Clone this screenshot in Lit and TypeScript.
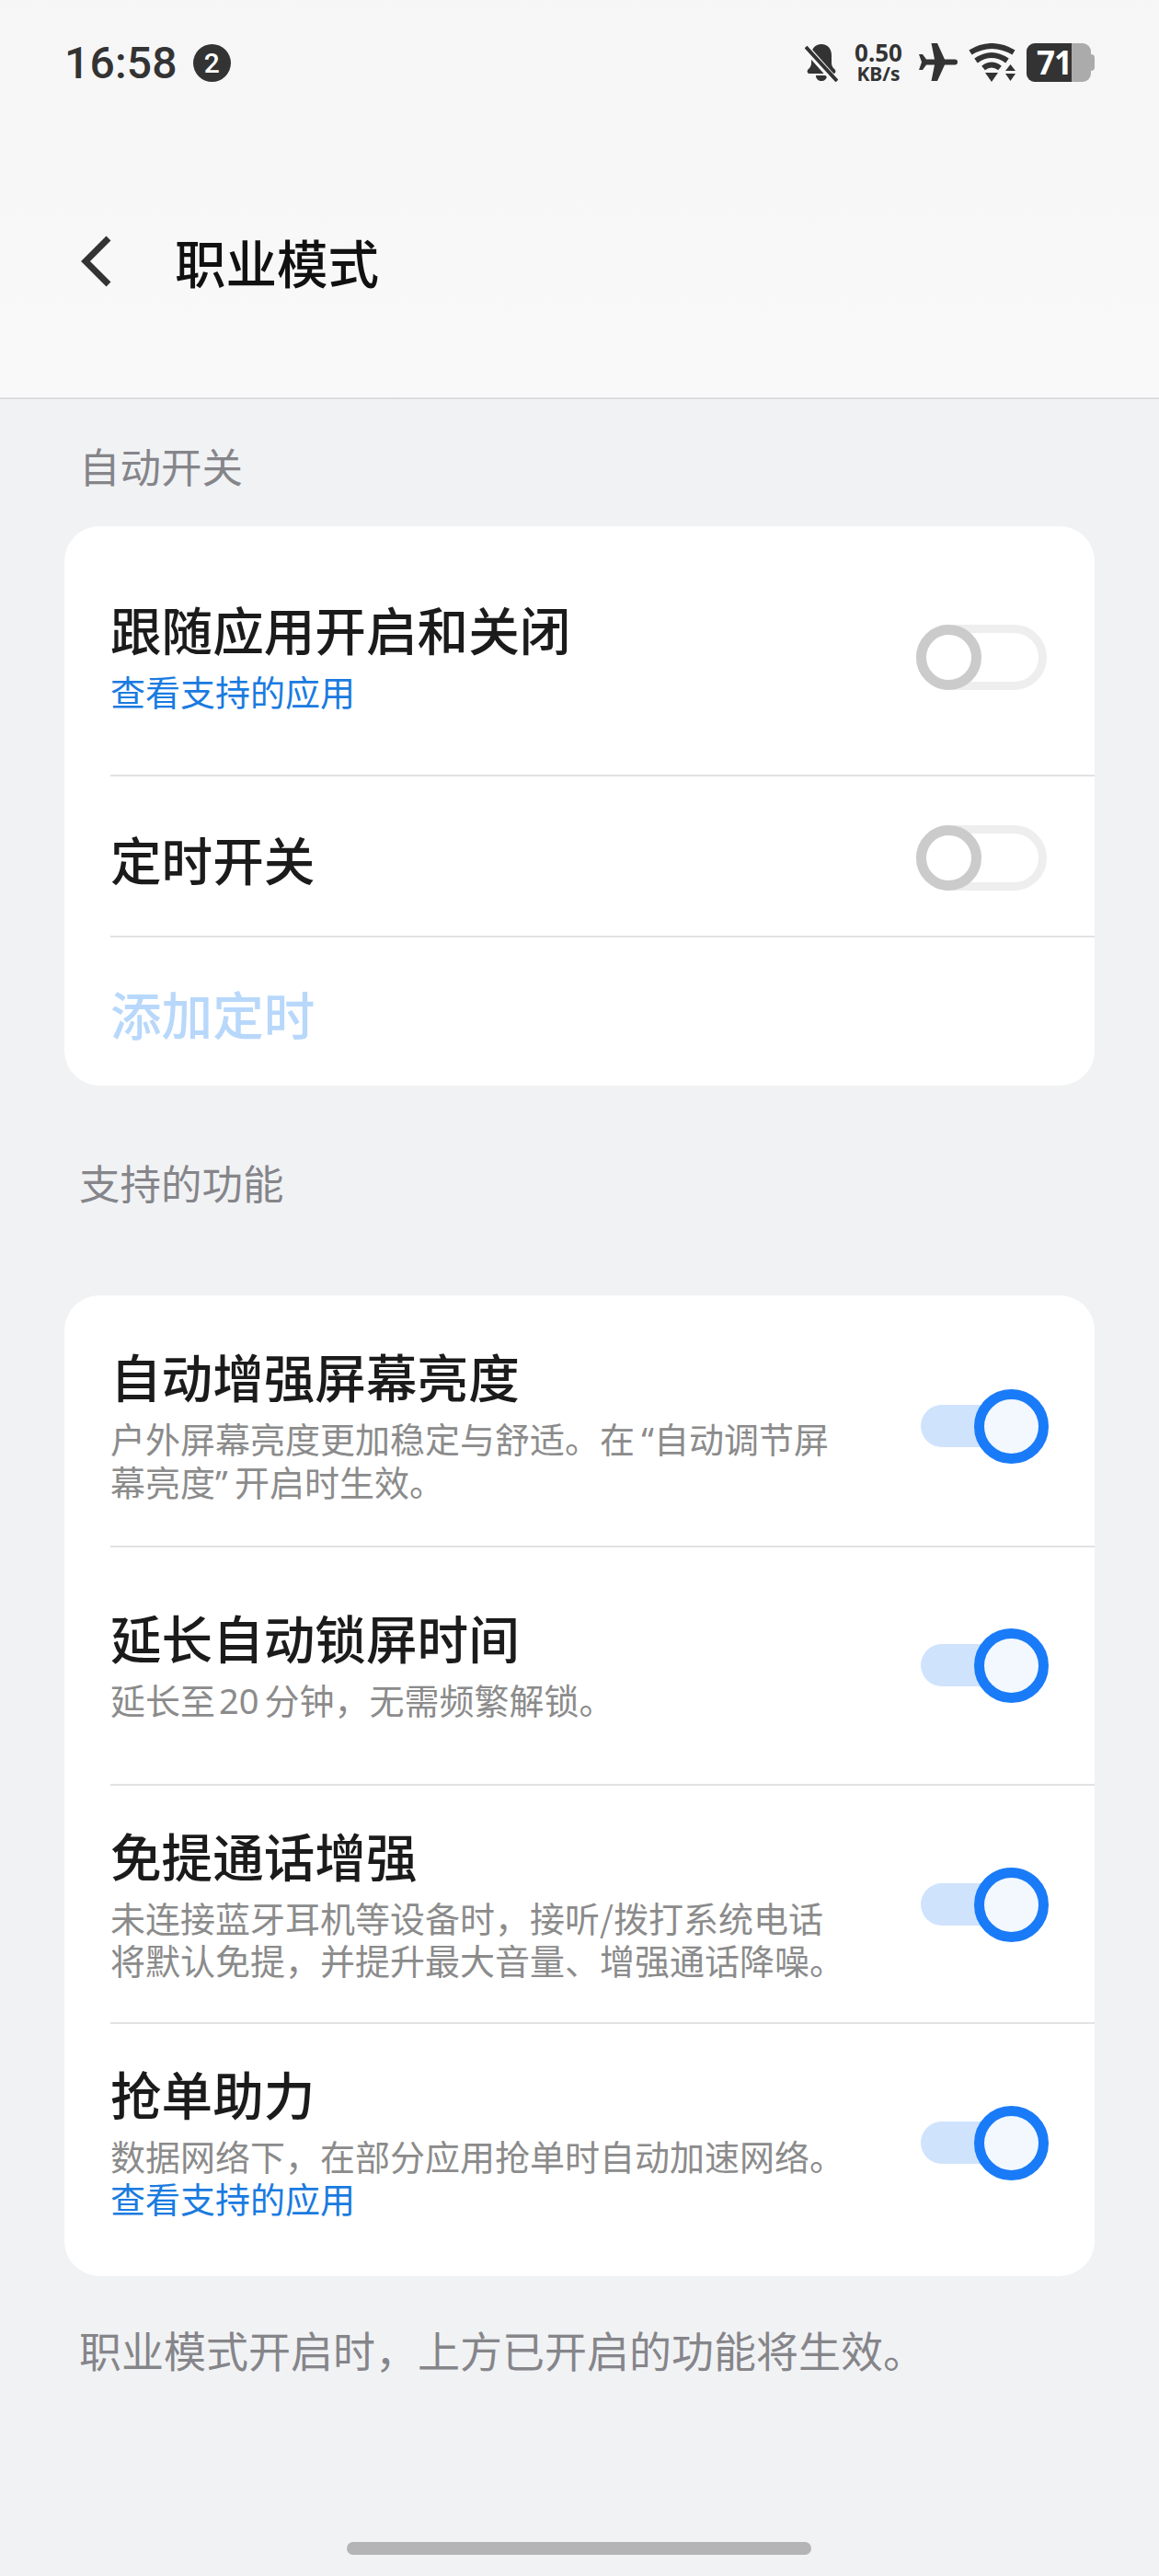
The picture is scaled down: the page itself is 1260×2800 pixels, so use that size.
import { LitElement, html, css, nothing } from 'lit';
import { customElement, property } from 'lit/decorators.js';

@customElement('app-switch')
export class AppSwitch extends LitElement {
  @property({ type: Boolean }) on = false;

  static styles = css`
    :host {
      display: block;
      flex: none;
      position: relative;
      width: 142px;
      height: 81px;
    }
    .track {
      position: absolute;
      box-sizing: border-box;
      border-radius: 40px;
    }
    .knob {
      position: absolute;
      box-sizing: border-box;
      border-radius: 50%;
    }
    .track.off {
      left: 0;
      top: 5px;
      width: 142px;
      height: 71px;
      border: 9px solid #eeeeee;
      background: #ffffff;
    }
    .knob.off {
      left: 0;
      top: 5px;
      width: 71px;
      height: 71px;
      border: 11px solid #cbcbcb;
      background: #ffffff;
    }
    .track.on {
      left: 5px;
      top: 17px;
      width: 90px;
      height: 46px;
      background: #cfe3fc;
    }
    .knob.on {
      left: 63px;
      top: 0;
      width: 81px;
      height: 81px;
      border: 11px solid #1a7bf8;
      background: #f2f8fe;
    }
  `;

  render() {
    const state = this.on ? 'on' : 'off';
    return html`
      <div class="track ${state}"></div>
      <div class="knob ${state}"></div>
    `;
  }
}

@customElement('app-row')
export class AppRow extends LitElement {
  @property({ type: String }) heading = '';
  @property({ type: String }) link = '';
  @property({ attribute: false }) sub: unknown = null;
  @property({ type: Boolean }) on = false;
  @property({ type: Boolean }) toggle = false;
  @property({ type: Boolean }) muted = false;

  static styles = css`
    :host {
      display: flex;
      align-items: center;
      justify-content: space-between;
    }
    .body.extra {
      padding-bottom: 6px;
    }
    .heading {
      font-size: 55.6px;
      line-height: 70px;
      color: #1b1b1b;
      font-weight: 500;
    }
    .heading.muted {
      color: #b8d8fb;
    }
    .extra .heading {
      margin-bottom: 10px;
    }
    .sub {
      font-size: 38px;
      line-height: 46px;
      color: #8b8b8b;
      white-space: nowrap;
    }
    .link {
      display: block;
      font-size: 38px;
      line-height: 46px;
      color: #1a7be0;
    }
    .open,
    .close {
      display: inline-block;
      width: 21px;
      font-family: 'Noto Sans', sans-serif;
    }
    .open {
      text-align: right;
    }
    .close {
      text-align: left;
    }
    .num {
      margin: 0 6px 0 4px;
      font-family: 'Noto Sans', sans-serif;
    }
  `;

  render() {
    const extra = this.sub || this.link;
    return html`
      <div class="body ${extra ? 'extra' : ''}">
        <div class="heading ${this.muted ? 'muted' : ''}">${this.heading}</div>
        ${this.sub ? html`<div class="sub">${this.sub}</div>` : nothing}
        ${this.link ? html`<span class="link">${this.link}</span>` : nothing}
      </div>
      ${this.toggle ? html`<app-switch ?on=${this.on}></app-switch>` : nothing}
    `;
  }
}

@customElement('app-root')
export class AppRoot extends LitElement {
  static styles = css`
    :host {
      display: block;
      width: 1260px;
      height: 2800px;
      overflow: hidden;
      background: #f1f2f4;
      font-family: 'Noto Sans CJK SC', 'Noto Sans', sans-serif;
    }
    .header {
      box-sizing: border-box;
      height: 434px;
      border-bottom: 2px solid #dcdcde;
      background: linear-gradient(#f6f6f7, #f9f9fa);
    }
    .status {
      display: flex;
      align-items: center;
      height: 136px;
      padding: 0 70px;
      color: #333333;
    }
    .time {
      font-family: Roboto, sans-serif;
      font-size: 48px;
      font-weight: 500;
      letter-spacing: 0.2px;
    }
    .badge {
      width: 41px;
      height: 41px;
      margin-left: 17px;
      border-radius: 50%;
      background: #333333;
      color: #ffffff;
      font-family: Roboto, sans-serif;
      font-size: 30px;
      font-weight: 500;
      line-height: 41px;
      text-align: center;
    }
    .status-right {
      display: flex;
      align-items: center;
      margin-left: auto;
    }
    .status-right svg {
      display: block;
      fill: #333333;
    }
    .bell {
      width: 36px;
      height: 42px;
    }
    .speed {
      margin-left: 17px;
      font-family: 'Noto Sans', sans-serif;
      font-weight: 700;
      text-align: center;
      width: 54px;
    }
    .speed div:first-child {
      font-size: 26px;
      line-height: 24px;
    }
    .speed div:last-child {
      font-size: 21px;
      line-height: 22px;
    }
    .plane {
      width: 42px;
      height: 42px;
      margin-left: 17px;
    }
    .wifi {
      width: 52px;
      height: 42px;
      margin-left: 12px;
    }
    .battery {
      display: flex;
      width: 70px;
      height: 42px;
      margin-left: 11px;
      border-radius: 9px;
      background: #ababab;
    }
    .battery-level {
      width: 49px;
      border-radius: 9px 0 0 9px;
      background: #333333;
      color: #ffffff;
      font-family: 'Noto Sans', sans-serif;
      font-size: 35px;
      font-weight: 700;
      line-height: 42px;
      text-align: right;
      letter-spacing: -1px;
    }
    .battery-nub {
      width: 4px;
      height: 18px;
      border-radius: 0 4px 4px 0;
      background: #ababab;
    }
    .nav {
      display: flex;
      align-items: center;
      height: 80px;
      margin-top: 108px;
      padding-left: 88px;
    }
    .back {
      display: block;
      width: 36px;
      height: 56px;
      fill: none;
      stroke: #333333;
      stroke-width: 7;
    }
    .title {
      margin-left: 66px;
      font-size: 55.5px;
      font-weight: 500;
      color: #111111;
    }
    .section {
      padding-left: 86px;
      font-size: 44.5px;
      line-height: 60px;
      color: #85858a;
    }
    .section.first {
      margin: 42px 0 36px;
    }
    .section.second {
      margin: 75px 0 93px;
    }
    .card {
      margin: 0 70px;
      padding-left: 50px;
      border-radius: 38px;
      background: #ffffff;
    }
    app-row {
      padding-right: 52px;
    }
    .line {
      border-bottom: 2px solid #e2e2e4;
    }
    .a1 { padding-top: 76px; padding-bottom: 62px; }
    .a2 { padding-top: 48px; padding-bottom: 44px; }
    .a3 { padding-top: 47px; padding-bottom: 44px; }
    .b1 { padding-top: 52px; padding-bottom: 40px; }
    .b2 { padding-top: 62px; padding-bottom: 62px; }
    .b3 { padding-top: 40px; padding-bottom: 39px; }
    .b4 { padding-top: 40px; padding-bottom: 56px; }
    .footnote {
      margin-top: 49px;
      padding-left: 86px;
      font-size: 46px;
      line-height: 60px;
      color: #85858a;
    }
    .home {
      width: 505px;
      height: 14px;
      margin: 180px 0 0 377px;
      border-radius: 7px;
      background: #b4b4b7;
    }
  `;

  render() {
    return html`
      <div class="header">
        <div class="status">
          <span class="time">16:58</span>
          <span class="badge">2</span>
          <div class="status-right">
            <svg class="bell" viewBox="0 0 36 42">
              <path d="M18 1c-7 0-11 5-11 12v9c0 3-2 5-4 7-1 2 0 4 2 4h26c2 0 3-2 2-4-2-2-4-4-4-7v-9c0-7-4-12-11-12z" />
              <path d="M12 35h12c0 4-3 6-6 6s-6-2-6-6z" />
              <path d="M0 4 34 42" stroke="#f7f7f8" stroke-width="8" />
              <path d="M1 4 35 41" stroke="#333333" stroke-width="4" />
            </svg>
            <div class="speed">
              <div>0.50</div>
              <div>KB/s</div>
            </div>
            <svg class="plane" viewBox="0 0 42 42">
              <path d="M39 17.500H28L20 0h-6.500L17 17.500H8L4 12H0l3 8.500L0 29h4l4-5.500h9L13.500 41H20l8-17.500h11a3 3 0 0 0 0-6z" />
            </svg>
            <svg class="wifi" viewBox="0 0 52 42">
              <path d="M2 10Q25-4 49 10" fill="none" stroke="#333333" stroke-width="6" />
              <path d="M8 19Q25 7 42 19" fill="none" stroke="#333333" stroke-width="6" />
              <path d="M16 27Q25 20 34 27" fill="none" stroke="#333333" stroke-width="6" />
              <path d="M18 32h14l-7 10z" />
              <path d="M40 30l5.500-7 5.500 7zM40 33h11l-5.500 8z" />
            </svg>
            <div class="battery">
              <div class="battery-level">71</div>
            </div>
            <div class="battery-nub"></div>
          </div>
        </div>
        <div class="nav">
          <svg class="back" viewBox="0 0 36 56">
            <path d="M30 3 5 28 30 53" />
          </svg>
          <span class="title">职业模式</span>
        </div>
      </div>

      <div class="section first">自动开关</div>
      <div class="card">
        <app-row class="a1 line" heading="跟随应用开启和关闭" link="查看支持的应用" toggle></app-row>
        <app-row class="a2 line" heading="定时开关" toggle></app-row>
        <app-row class="a3" heading="添加定时" muted></app-row>
      </div>

      <div class="section second">支持的功能</div>
      <div class="card">
        <app-row
          class="b1 line"
          heading="自动增强屏幕亮度"
          toggle
          on
          .sub=${html`户外屏幕亮度更加稳定与舒适。在<span class="open">“</span>自动调节屏<br />幕亮度<span class="close">”</span>开启时生效。`}
        ></app-row>
        <app-row
          class="b2 line"
          heading="延长自动锁屏时间"
          toggle
          on
          .sub=${html`延长至<span class="num">20</span>分钟，无需频繁解锁。`}
        ></app-row>
        <app-row
          class="b3 line"
          heading="免提通话增强"
          toggle
          on
          .sub=${html`未连接蓝牙耳机等设备时，接听/拨打系统电话<br />将默认免提，并提升最大音量、增强通话降噪。`}
        ></app-row>
        <app-row
          class="b4"
          heading="抢单助力"
          link="查看支持的应用"
          toggle
          on
          .sub=${html`数据网络下，在部分应用抢单时自动加速网络。`}
        ></app-row>
      </div>

      <div class="footnote">职业模式开启时，上方已开启的功能将生效。</div>
      <div class="home"></div>
    `;
  }
}
